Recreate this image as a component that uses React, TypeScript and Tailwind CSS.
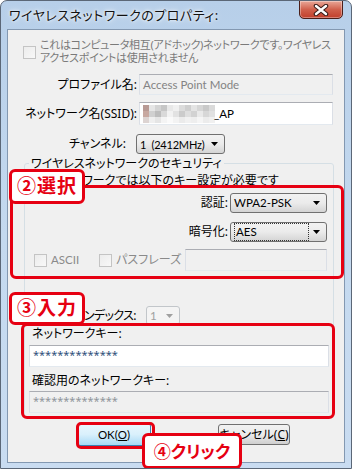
import { FC, ReactNode } from "react";

const jp = "font-['Noto_Sans','Noto_Sans_CJK_JP',sans-serif] [font-feature-settings:'palt']";
const latin = "font-['Lato','Noto_Sans_CJK_JP',sans-serif] text-[11.5px]";

const Checkbox: FC = () => (
  <span className="block w-[13px] h-[13px] shrink-0 border border-[#c4c4c4] bg-gradient-to-br from-[#ececec] to-[#f8f8f8]" />
);

const Arrow: FC<{ disabled?: boolean }> = ({ disabled }) => (
  <svg width="7" height="4" viewBox="0 0 7 4" className="shrink-0">
    <path d="M0 0h7L3.5 4z" fill={disabled ? "#a0a0a0" : "#000"} />
  </svg>
);

interface ComboProps {
  text: string;
  className: string;
  focused?: boolean;
  disabled?: boolean;
}

const Combo: FC<ComboProps> = ({ text, className, focused, disabled }) => (
  <div
    className={
      "flex items-center rounded-[3px] border pl-[3px] pr-[6px] " +
      (disabled
        ? "border-[#c2c6ca] bg-[#f4f4f4] text-[#a0a0a0] "
        : "border-[#707070] bg-gradient-to-b from-[#f2f2f2] via-[#ebebeb] to-[#d4d4d4] text-black ") +
      className
    }
  >
    <span
      className={
        "flex-1 flex items-center h-full leading-none whitespace-pre " +
        (focused ? "border border-dotted border-[#333] my-[2px] mr-[4px] h-[14px] pl-px" : "")
      }
    >
      {text}
    </span>
    <Arrow disabled={disabled} />
  </div>
);

const TextBox: FC<{ className: string; disabled?: boolean; children?: ReactNode }> = ({
  className,
  disabled,
  children,
}) => (
  <div
    className={
      "border border-[#abadb3] border-l-[#dbdfe6] border-r-[#dbdfe6] border-b-[#e3e9ef] flex items-center pl-[3px] " +
      (disabled ? "bg-[#f0f0f0] " : "bg-white ") +
      className
    }
  >
    {children}
  </div>
);

const Callout: FC<{ text: string; className: string }> = ({ text, className }) => (
  <div
    className={
      "absolute flex items-center justify-center bg-white border-[3px] border-[#e60012] rounded-[6px] text-[#e60012] font-bold leading-none " +
      className
    }
  >
    {text}
  </div>
);

const Mosaic: FC = () => {
  const cells = [
    "#b89a94", "#e6e6e6", "#d4d4d4", "#c6c6c6", "#e8e8e8", "#f0f0f0", "#dcdcdc", "#cfcfcf", "#e4e4e4", "#d6d6d6", "#c9c9c9", "#dadada",
    "#c8a8a0", "#d0d0d0", "#bdbdbd", "#d9d9d9", "#f2f2f2", "#e2e2e2", "#cbcbcb", "#dedede", "#d2d2d2", "#e9e9e9", "#d7d7d7", "#e1e1e1",
    "#ddd4d2", "#efefef", "#e5e5e5", "#f4f4f4", "#fafafa", "#f3f3f3", "#ebebeb", "#f1f1f1", "#eeeeee", "#f5f5f5", "#ececec", "#f0f0f0",
  ];
  return (
    <svg width="72" height="18" viewBox="0 0 72 18" className="shrink-0">
      {cells.map((c, i) => (
        <rect key={i} x={(i % 12) * 6} y={Math.floor(i / 12) * 6} width="6" height="6" fill={c} />
      ))}
    </svg>
  );
};

export default function App() {
  return (
    <div
      className={
        "relative w-[352px] h-[469px] overflow-hidden rounded-t-[7px] border border-[#5b6777] bg-gradient-to-b from-[#b7cfe9] via-[#c4d9ef] to-[#c9dcf1] px-[6px] pt-[28px] pb-[5px] text-[12px] text-black " +
        jp
      }
    >
      {/* title bar */}
      <div className="absolute left-[8px] top-[6px] text-[13px] tracking-[0.5px] leading-[16px] text-[#111] [text-shadow:0_0_6px_#ffffff,0_0_3px_#ffffff]">
        ワイヤレスネットワークのプロパティ:
      </div>
      <div className="absolute right-[8px] top-[-1px] w-[44px] h-[19px] rounded-b-[5px] border border-[#4b1f1a] bg-gradient-to-b from-[#e8a798] via-[#d0604c] to-[#c13e2b] flex items-center justify-center shadow-[inset_0_0_0_1px_rgba(255,255,255,0.35)]">
        <svg width="16" height="12" viewBox="0 0 16 12">
          <path d="M3 2l10 8M13 2L3 10" stroke="#3a1d1a" strokeWidth="4.5" strokeLinecap="round" />
          <path d="M3 2l10 8M13 2L3 10" stroke="#ffffff" strokeWidth="2.4" strokeLinecap="round" />
        </svg>
      </div>

      {/* client area */}
      <div className="h-full border border-[#8398b1] bg-[#f0f0f0] flex flex-col">
        <div className="mt-[8px] pl-[15px] flex items-start gap-[4px] text-[#7a7a7a]">
          <div className="mt-[8px]">
            <Checkbox />
          </div>
          <div className="flex flex-col text-[11px] leading-[13px] tracking-[-0.3px] whitespace-nowrap">
            <span>これはコンピュータ相互(アドホック)ネットワークです。ワイヤレス</span>
            <span>アクセスポイントは使用されません</span>
          </div>
        </div>

        <div className="mt-[10px] flex items-center">
          <div className="w-[129px] text-right">プロファイル名:</div>
          <TextBox className={"ml-[2px] w-[194px] h-[21px] text-[#838383] " + latin} disabled>
            Access Point Mode
          </TextBox>
        </div>

        <div className="mt-[7px] flex items-center">
          <div className="w-[129px] text-right">ネットワーク名(SSID):</div>
          <TextBox className={"ml-[2px] w-[194px] h-[23px] " + latin}>
            <Mosaic />
            <span className="-ml-px">_AP</span>
          </TextBox>
        </div>

        <div className="mt-[9px] flex items-center">
          <div className="w-[118px] text-right">チャンネル:</div>
          <Combo
            text="1  (2412MHz)"
            className="ml-[10px] w-[89px] h-[20px] font-['Lato',sans-serif] text-[11px] tracking-[-0.2px]"
          />
        </div>

        <fieldset className="mt-[3px] ml-[16px] w-[310px] border border-[#d5dfe5] rounded-[3px] pb-[4px]">
          <legend className="ml-[4px] px-[2px] leading-[13px]">ワイヤレスネットワークのセキュリティ</legend>
          <div className="mt-[4px] pl-[5px] leading-[13px]">このネットワークでは以下のキー設定が必要です</div>

          <div className="mt-[6px] flex items-center justify-end pr-[6px]">
            <span>認証:</span>
            <Combo text="WPA2-PSK" className={"ml-[2px] w-[97px] h-[20px] " + latin} />
          </div>
          <div className="mt-[9px] flex items-center justify-end pr-[6px]">
            <span>暗号化:</span>
            <Combo text="AES" focused className={"ml-[2px] w-[97px] h-[20px] " + latin} />
          </div>

          <div className="mt-[7px] flex items-center pl-[9px] text-[#8a8a8a]">
            <Checkbox />
            <span className={"ml-[4px] " + latin}>ASCII</span>
            <span className="ml-[20px]">
              <Checkbox />
            </span>
            <span className="ml-[4px]">パスフレーズ</span>
            <TextBox className="ml-auto mr-[6px] w-[142px] h-[22px]" disabled />
          </div>

          <div className="mt-[35px] flex items-center">
            <div className="w-[111px] text-right tracking-[-0.6px]">キーインデックス:</div>
            <Combo text="1" disabled className={"ml-[10px] w-[34px] h-[19px] " + latin} />
          </div>

          <div className="mt-[2px] pl-[7px] leading-[13px]">ネットワークキー:</div>
          <TextBox className="mt-[5px] ml-[4px] w-[300px] h-[22px] text-[#2f4f7a] text-[11px] items-start pt-[1px] font-['Noto_Sans',sans-serif]">
            **************
          </TextBox>
          <div className="mt-[7px] pl-[7px] leading-[13px]">確認用のネットワークキー:</div>
          <TextBox
            disabled
            className="mt-[4px] ml-[4px] w-[300px] h-[22px] text-[#8f959b] text-[11px] items-start pt-[1px] font-['Noto_Sans',sans-serif]"
          >
            **************
          </TextBox>
        </fieldset>

        <div className="mt-[5px] flex items-start pl-[69px]">
          <div className={"w-[74px] h-[23px] rounded-[3px] border border-[#3c7fb1] bg-gradient-to-b from-[#eaf6fd] via-[#d9f0fc] to-[#a7d9f5] flex items-center justify-center " + latin}>
            OK(<span className="underline">O</span>)
          </div>
          <div className="ml-[67px] mt-px w-[72px] h-[21px] rounded-[3px] border border-[#707070] bg-gradient-to-b from-[#f2f2f2] via-[#ebebeb] to-[#cfcfcf] flex items-center justify-center">
            キャンセル(<span className="underline">C</span>)
          </div>
        </div>
      </div>

      {/* annotations */}
      <div className="absolute left-[9px] top-[184px] w-[334px] h-[94px] border-[3px] border-[#e60012] rounded-[6px]" />
      <Callout text="②選択" className="left-[8px] top-[168px] w-[76px] h-[35px] text-[19px] tracking-[1px]" />
      <div className="absolute left-[20px] top-[322px] w-[314px] h-[96px] border-[3px] border-[#e60012] rounded-[6px]" />
      <Callout text="③入力" className="left-[8px] top-[291px] w-[76px] h-[33px] text-[19px] tracking-[1px]" />
      <div className="absolute left-[75px] top-[421px] w-[79px] h-[27px] border-[3px] border-[#e60012] rounded-[5px]" />
      <Callout text="④クリック" className="left-[141px] top-[432px] w-[100px] h-[36px] text-[17px]" />
    </div>
  );
}
